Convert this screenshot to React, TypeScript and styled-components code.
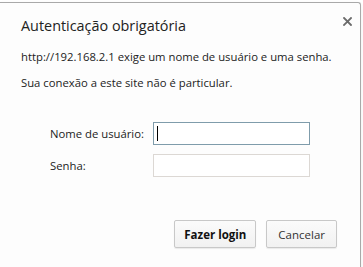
import React from 'react';
import styled, {createGlobalStyle} from "styled-components";

const GlobalStyle = createGlobalStyle`
	html, body {
		margin: 0;
		padding: 0;
		background: #ffffff;
	}
	body {
		font-family: "Open Sans", "Noto Sans", "Liberation Sans", sans-serif;
		color: #222;
	}
`

function App() {
	return (
		<Page>
			<GlobalStyle/>
			<Dialog>
				<CloseButton aria-label="Fechar">
					<svg width="9" height="9" viewBox="0 0 9 9">
						<path d="M1 1 L8 8 M8 1 L1 8" stroke="#6b6b6b" strokeWidth="1.8" strokeLinecap="square"/>
					</svg>
				</CloseButton>
				<Title>Autenticação obrigatória</Title>
				<Message>http://192.168.2.1 exige um nome de usuário e uma senha.</Message>
				<Message>Sua conexão a este site não é particular.</Message>
				<Form>
					<Field>
						<Label>Nome de usuário:</Label>
						<InputWrap>
							<Input focused/>
							<Caret/>
						</InputWrap>
					</Field>
					<Field>
						<Label>Senha:</Label>
						<InputWrap>
							<Input type="password"/>
						</InputWrap>
					</Field>
				</Form>
				<Buttons>
					<Button primary>Fazer login</Button>
					<Button>Cancelar</Button>
				</Buttons>
			</Dialog>
		</Page>
	);
}

export default App;

const Page = styled.div`
	width: 363px;
	height: 267px;
	padding-top: 2px;
	box-sizing: border-box;
	overflow: hidden;
`

const Dialog = styled.div`
	position: relative;
	width: 362px;
	height: 270px;
	margin-left: -1px;
	box-sizing: border-box;
	background: #fdfdfd;
	border: 1px solid #a9a9a9;
	border-bottom: none;
	border-top-right-radius: 3px;
	box-shadow: 0 2px 4px rgba(0, 0, 0, 0.08);
	padding: 13px 0 0 21px;
	display: flex;
	flex-direction: column;
`

const CloseButton = styled.button`
	position: absolute;
	top: 11px;
	right: 5px;
	width: 15px;
	height: 15px;
	padding: 0;
	border: none;
	background: transparent;
	display: flex;
	align-items: center;
	justify-content: center;
`

const Title = styled.div`
	font-size: 14.4px;
	line-height: 20px;
	color: #222;
	margin-bottom: 13px;
`

const Message = styled.div`
	font-size: 11.3px;
	line-height: 16px;
	color: #222;
	margin-bottom: 10px;
`

const Form = styled.div`
	display: flex;
	flex-direction: column;
	gap: 9px;
	margin-top: 21px;
	padding-left: 29px;
`

const Field = styled.div`
	display: grid;
	grid-template-columns: 103px 157px;
	align-items: center;
`

const Label = styled.label`
	font-size: 11.3px;
	color: #222;
`

const InputWrap = styled.div`
	position: relative;
	display: flex;
`

const Input = styled.input<{ focused?: boolean }>`
	width: 100%;
	height: 23px;
	box-sizing: border-box;
	border: 1px solid ${p => p.focused ? '#7f9cab' : '#dcd8d4'};
	background: #fff;
	outline: none;
	font-size: 12px;
	padding: 0 4px;

	&:focus {
		border-color: #7f9cab;
	}
`

const Caret = styled.span`
	position: absolute;
	left: 4px;
	top: 4px;
	width: 1px;
	height: 15px;
	background: #000;
`

const Buttons = styled.div`
	display: flex;
	justify-content: flex-end;
	gap: 10px;
	margin-top: 43px;
	padding-right: 23px;
`

const Button = styled.button<{ primary?: boolean }>`
	height: 28px;
	box-sizing: border-box;
	padding: 0 ${p => p.primary ? '9px' : '11px'};
	min-width: 70px;
	font-family: "Open Sans", "Noto Sans", sans-serif;
	font-size: 11.5px;
	font-weight: ${p => p.primary ? 700 : 400};
	color: ${p => p.primary ? '#111' : '#333'};
	background: linear-gradient(#fbfbfb, #f1f1f1);
	border: 1px solid #c8c8c8;
	border-radius: 2px;
	box-shadow: 0 1px 1px rgba(0, 0, 0, 0.08);
`
